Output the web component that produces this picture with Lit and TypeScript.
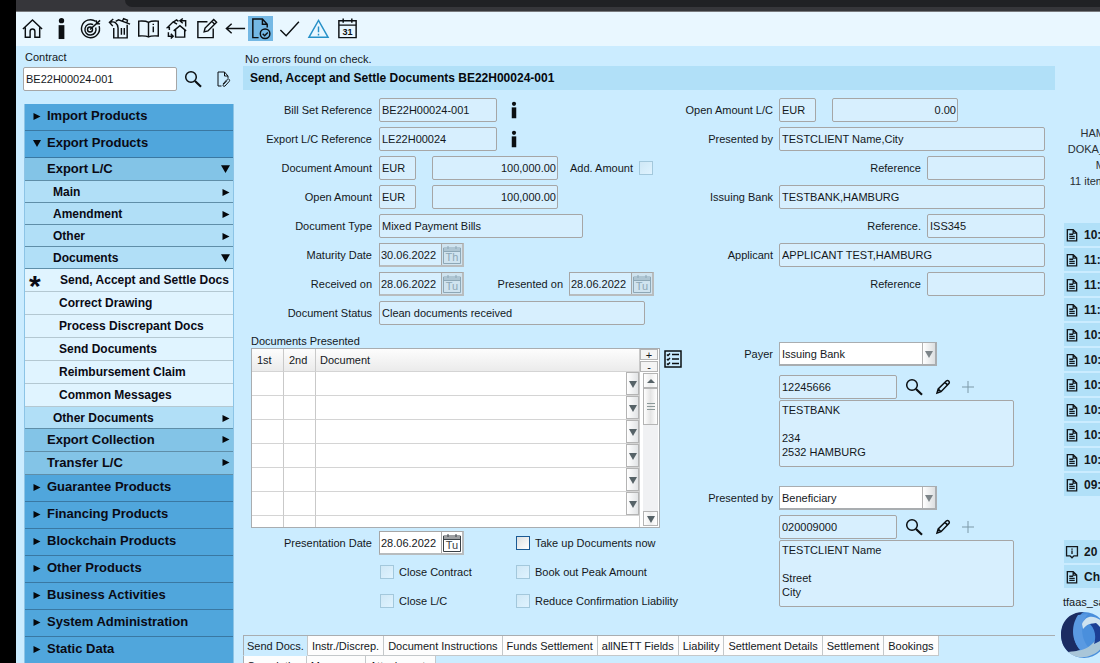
import { LitElement, html, css, svg, nothing } from "lit";
import { customElement, property, state } from "lit/decorators.js";
import { classMap } from "lit/directives/class-map.js";

const ICONS: Record<string, { size: number; body: unknown }> = {
  home: {
    size: 24,
    body: svg`<path d="M2 12.500 12 3l10 9.500M4.500 11v10.200H9.500V15a2.500 2.500 0 0 1 5 0v6.200h5V11" />`,
  },
  info: {
    size: 24,
    body: svg`<circle cx="12" cy="3.800" r="2.800" fill="currentColor" stroke="none" /><path d="M9 8.500h6V23H9z" fill="currentColor" stroke="none" />`,
  },
  target: {
    size: 24,
    body: svg`<path d="M17.500 4.600A9.400 9.400 0 1 0 21 9.500M14.800 8A5.800 5.800 0 1 0 17.400 11" /><circle cx="11.500" cy="13" r="2.600" /><path d="M11.500 13 22 3.500M18 3.500l.5 3.300 3.500.4" />`,
  },
  restore: {
    size: 24,
    body: svg`<path d="M5.500 2 1.500 5.500l3.500 4M2 5.500c5-1.500 8 1 8.500 6v10M8 4.500l3-1.500 12 4.500M15 4.500l1.300-2.700 4 1.500-.6 2.800M10.500 21.800h9.500V8M6 11.500v10.300h4.500M14 11.500v7M17 11.500v7" />`,
  },
  book: {
    size: 24,
    body: svg`<path d="M12 5.500v15M12 5.500C9.500 4 6 4 1.800 4.300v15.500C6 19.500 9.500 19.500 12 20.800c2.500-1.300 6-1.300 10.200-1V4.300C18 4 14.500 4 12 5.500zM17 10v6M17 7v1.400" />`,
  },
  sync: {
    size: 24,
    body: svg`<path d="M8 14.500 14.500 9l6.500 5.500M10 13.500V21h9.500v-7.500M3.500 13.500v-2.500L1.500 11l6-6 4 2.500M8 5l3-2 2 1.500M17.500 1.500l-3 2.500 3 2.500M14.500 4h6v6M5 22.500l2.500-2.500L5 17.500M7.500 20H2.500v-4" />`,
  },
  edit: {
    size: 24,
    body: svg`<path d="M13 5H3v16.500h16V12M9.500 15.500l1-4L19.500 2.500l3 3-9 9zM17.500 4.500l3 3" />`,
  },
  back: { size: 24, body: svg`<path d="M2.500 12H22M8 7l-5.500 5L8 17" />` },
  doccheck: {
    size: 24,
    body: svg`<path d="M10 21.500H4V2h10l5 5.500V11M14 2v5.500h5" /><circle cx="16.800" cy="17.500" r="5" /><path d="m14.300 17.500 2 2 3.300-3.300" />`,
  },
  check: { size: 24, body: svg`<path d="m2.500 13.500 6 6L21.800 5" />` },
  warning: { size: 24, body: svg`<path d="M12 3.500 22 21.200H2zM12 10v6M12 17.500v1.800" />` },
  calendar: {
    size: 24,
    body: svg`<path d="M3 4h18v17.500H3zM3 8.500h18M7.500 1.500V6M16.500 1.500V6" />`,
  },
  search: { size: 18, body: svg`<circle cx="7" cy="7" r="5.300" /><path d="m11 11 6 5.700" stroke-width="2.200" />` },
  attach: {
    size: 18,
    body: svg`<path d="M7.500 16H4V2h6.500L14 6V8M10.500 2v4H14M9 14l4-4.500c1.500-1.500 3.500.3 2.200 1.900L11 16c-1.200 1-2.600-.2-1.700-1.400l3.700-4" />`,
  },
  pencil: { size: 18, body: svg`<path d="m3 15 1.200-4L12.500 2.800c1.500-1 3.500.9 2.600 2.500L7 13.700zM4.300 11l2.700 2.700M11 4.400l2.700 2.700" />` },
  plus: { size: 18, body: svg`<path d="M9 3v12M3 9h12" />` },
  list: {
    size: 18,
    body: svg`<path d="M1 1h16v16H1zM8 4.500h7M8 9h7M8 13.500h7M3 4.500l1 1 2-2M3 9l1 1 2-2M3 13.500l1 1 2-2" />`,
  },
  doc: {
    size: 18,
    body: svg`<path d="M3 2h7.500L15 6.500V16.500H3zM10.500 2v4.500H15M5.500 8h5M5.500 10.700h7M5.500 13.400h7" />`,
  },
  note: { size: 18, body: svg`<path d="M2 2h14v12H11.500L9 16.500 6.500 14H2zM9 7v4.500M9 4.500V6" />` },
};

@customElement("ui-icon")
class UiIcon extends LitElement {
  @property() name = "home";
  static styles = css`
    :host { display: inline-flex; }
    svg { width: 100%; height: 100%; fill: none; stroke: currentColor; stroke-width: var(--stroke, 1.5); }
  `;
  render() {
    const icon = ICONS[this.name];
    return html`<svg viewBox="0 0 ${icon.size} ${icon.size}" aria-hidden="true">${icon.body}</svg>`;
  }
}

type Row = { text: string; level: number; state?: "open" | "closed" | "current" };

const MENU: Row[] = [
  { text: "Import Products", level: 1, state: "closed" },
  { text: "Export Products", level: 1, state: "open" },
  { text: "Export L/C", level: 2, state: "open" },
  { text: "Main", level: 3, state: "closed" },
  { text: "Amendment", level: 3, state: "closed" },
  { text: "Other", level: 3, state: "closed" },
  { text: "Documents", level: 3, state: "open" },
  { text: "Send, Accept and Settle Docs", level: 4, state: "current" },
  { text: "Correct Drawing", level: 4 },
  { text: "Process Discrepant Docs", level: 4 },
  { text: "Send Documents", level: 4 },
  { text: "Reimbursement Claim", level: 4 },
  { text: "Common Messages", level: 4 },
  { text: "Other Documents", level: 3, state: "closed" },
  { text: "Export Collection", level: 2, state: "closed" },
  { text: "Transfer L/C", level: 2, state: "closed" },
  { text: "Guarantee Products", level: 1, state: "closed" },
  { text: "Financing Products", level: 1, state: "closed" },
  { text: "Blockchain Products", level: 1, state: "closed" },
  { text: "Other Products", level: 1, state: "closed" },
  { text: "Business Activities", level: 1, state: "closed" },
  { text: "System Administration", level: 1, state: "closed" },
  { text: "Static Data", level: 1, state: "closed" },
];

const arrow = (dir: "down" | "right" | "up") => html`<svg class="arrow ${dir}" viewBox="0 0 8 8" aria-hidden="true">
  <path d=${dir === "down" ? "M0 1h8L4 8z" : dir === "up" ? "M0 6h8L4 2z" : "M.5 1v7l7-3.500z"} />
</svg>`;

@customElement("side-menu")
class SideMenu extends LitElement {
  static styles = css`
    :host { display: block; }
    nav { display: flex; flex-direction: column; border: 1px solid #8cc4e6; border-width: 0 1px; }
    .row {
      display: flex; align-items: center; box-sizing: border-box; width: 100%; margin: 0; border: 0;
      border-bottom: 1px solid #5f8ea8; color: #0a0a14; text-decoration: none; text-align: left;
      font: bold 12px "Liberation Sans", Arial, sans-serif; white-space: nowrap; cursor: pointer;
    }
    .l1 { height: 27px; background: #50a6dc; font-size: 13px; padding: 0 0 3px 8px; border-color: #3a78a2; }
    .l2 { height: 23px; background: #83c4e7; padding: 0 3px 2px 22px; font-size: 13px; }
    .l3 { height: 22px; background: #b1dff7; padding: 0 3px 0 28px; }
    .l4 { height: 23px; background: #e0f4ff; padding: 0 0 1px 34px; border-color: #b4c8d2; }
    .l1 .arrow { margin-right: 6px; }
    .l2 .arrow, .l3 .arrow { margin-left: auto; }
    .l2 .arrow.down, .l3 .arrow.down { width: 9px; height: 9px; }
    .current { padding-left: 4px; }
    .star { width: 31px; font-size: 30px; line-height: 10px; padding-top: 13px; box-sizing: border-box; }
    .arrow { width: 8px; height: 8px; fill: #05080c; flex: none; }
  `;
  render() {
    return html`<nav aria-label="Products">
      ${MENU.map((r) => {
        const cls = classMap({ row: true, ["l" + r.level]: true, current: r.state === "current" });
        if (r.level === 4)
          return html`<a class=${cls} href="#">${r.state === "current" ? html`<span class="star">*</span>` : nothing}${r.text}</a>`;
        const a = arrow(r.state === "open" ? "down" : "right");
        return html`<button class=${cls} aria-expanded=${r.state === "open"}>
          ${r.level === 1 ? a : nothing}<span>${r.text}</span>${r.level > 1 ? a : nothing}
        </button>`;
      })}
    </nav>`;
  }
}

const TOOLS: [string, string][] = [
  ["home", "Home"], ["info", "Info"], ["target", "Target"], ["restore", "Restore"], ["book", "Manual"],
  ["sync", "Switch"], ["edit", "Edit"], ["back", "Back"], ["doccheck", "Check document"],
  ["check", "Confirm"], ["warning", "Warnings"], ["calendar", "Calendar"],
];
const TIMES = ["10:", "11:", "11:", "11:", "10:", "10:", "10:", "10:", "10:", "10:", "09:"];
const TABS = ["Send Docs.", "Instr./Discrep.", "Document Instructions", "Funds Settlement", "allNETT Fields",
  "Liability", "Settlement Details", "Settlement", "Bookings"];
const SUBTABS = ["Completion", "Messages", "Attachments"];

@customElement("app-root")
class AppRoot extends LitElement {
  @state() private tab = 0;

  static styles = css`
    :host {
      display: flex; height: 100vh; overflow: hidden; background: #cbecff; color: #14181c;
      font: 11px/14px "Liberation Sans", Arial, sans-serif;
    }
    * { box-sizing: border-box; }
    button, input, select, textarea { font: inherit; color: inherit; margin: 0; }
    .edge { width: 16px; flex: none; background: #000; }
    .app { flex: 1; min-width: 0; display: flex; flex-direction: column; }
    .browser { height: 12px; flex: none; background: #36363a; border-bottom: 1px solid #77797d; padding-left: 109px; }
    .address { height: 7px; background: #202124; border-bottom-left-radius: 12px; }
    .toolbar { height: 34px; flex: none; display: flex; align-items: center; gap: 4px; background: #e9f7ff; padding: 0 0 1px 4px; }
    .tool { width: 25px; height: 25px; padding: 1px; border: 0; background: none; color: #0b0f12; display: flex; cursor: pointer; }
    .tool ui-icon { flex: 1; }
    .doccheck { background: #74b8e4; margin-left: -4px; }
    .warning { color: #2791c8; }
    .calendar { display: grid; }
    .calendar > * { grid-area: 1 / 1; }
    .calendar span { font: bold 9px/11px "Liberation Sans", Arial, sans-serif; align-self: end; text-align: center; padding-bottom: 2px; }
    .body { flex: 1; min-height: 0; display: flex; }

    .side { width: 227px; flex: none; padding: 4px 9px 0 7px; }
    .side label { display: block; padding-left: 2px; line-height: 15px; }
    .lookup { display: flex; align-items: center; padding-top: 2px; }
    .lookup .field { width: 154px; background: #fff; }
    .lookup .icon { margin-left: 7px; }
    .lookup .icon + .icon { margin-left: 12px; --stroke: 1; }
    side-menu { margin: 13px 0 0 1px; }

    main { flex: 1; min-width: 0; display: flex; flex-direction: column; }
    .status { padding: 6px 0 0 2px; margin: 0; }
    h1 { margin: 0; font-size: 12px; line-height: 24px; background: #b1e0f8; padding-left: 7px; color: #05080c; }
    .form { display: flex; padding: 8px 10px 0 0; }
    .left { width: 427px; flex: none; display: flex; flex-direction: column; gap: 5px; }
    .right { flex: 1; min-width: 0; display: flex; flex-direction: column; gap: 5px; }
    .row { display: flex; align-items: center; height: 24px; }
    .lab { text-align: right; flex: none; white-space: nowrap; }
    .left .lab { width: 129px; margin-right: 7px; }
    .right .lab { width: 103px; margin-right: 6px; }
    .right .ref { width: auto; margin-left: auto; }
    .left .lab.inner { width: 99px; margin-right: 6px; }
    .left .lab.add { width: auto; margin: 0 6px 0 12px; }
    .field {
      height: 24px; border: 1px solid #a6a6a6; border-radius: 2px; padding: 0 2px; background: #d7effe;
      outline: none; min-width: 0;
    }
    .w-cur { width: 37px; margin-right: 16px; }
    .w-amt { width: 126px; text-align: right; padding-right: 1px; }
    .w-ref { width: 118px; }
    .w-type { width: 204px; }
    .w-long { width: 266px; }
    .w-fill { flex: 1; }
    .icon { width: 18px; height: 18px; flex: none; padding: 0; border: 0; background: none; display: flex; cursor: pointer; color: #0b0f12; }
    .icon ui-icon { flex: 1; }
    .icon:disabled { color: #7d99a8; }
    .row .icon.inf { margin-left: 8px; }
    .date { display: flex; width: 85px; height: 24px; border: 1px solid #a6a6a6; border-width: 1px 2px 2px 1px; border-color: #a6a6a6 #b8bcbe #b8bcbe #a6a6a6; background: #d7effe; }
    .date input { flex: 1; min-width: 0; border: 0; padding: 0 0 0 1px; background: none; outline: none; }
    .date button { width: 21px; border: 0; border-left: 1px solid #a6a6a6; padding: 1px; display: grid; background: #cfe3ef; color: #8da7b6; }
    .date button > * { grid-area: 1 / 1; }
    .date button span { align-self: end; line-height: 13px; text-align: center; }
    .date svg { width: 18px; height: 19px; fill: none; stroke: currentColor; }
    .date.on, .date.on button { background: #fff; }
    .date.on button { color: #3a4146; }
    .box { appearance: none; width: 14px; height: 14px; flex: none; border: 1px solid #a3c8dc; background: linear-gradient(135deg, #cfe8f6, #dff3ff); }
    .box.on { border-color: #1a5a94; background: linear-gradient(135deg, #dcdfe0, #fff); }
    .opts { display: grid; grid-template-columns: 136px 136px 1fr; row-gap: 5px; margin-top: -2px; }
    .opts .lab { width: auto; line-height: 24px; }
    .opts .start { grid-column: 2; }
    .tick { display: flex; align-items: center; gap: 5px; height: 24px; white-space: nowrap; padding-left: 1px; }

    .docs { display: flex; align-items: flex-start; padding: 5px 0 0 8px; }
    .grid { width: 409px; flex: none; }
    .caption { line-height: 13px; }
    .panel { display: flex; height: 180px; overflow: hidden; border: 1px solid #a9adb0; background: #fff; }
    table { flex: 1; align-self: flex-start; border-collapse: separate; border-spacing: 0; table-layout: fixed; }
    th, td { padding: 0; border-right: 1px solid #c9c9c9; border-bottom: 1px solid #d4d4d4; height: 24px; }
    th { height: 23px; background: linear-gradient(#fdfdfd, #ebebeb); font-weight: normal; text-align: left; padding-left: 5px; }
    th:nth-child(-n + 2) { width: 32px; }
    th:last-child { padding-left: 4px; }
    td .drop { display: flex; margin-left: auto; }
    .drop { width: 13px; height: 23px; padding: 0; border: 1px solid #b4b4b4; background: linear-gradient(90deg, #fff, #e2e4e6); align-items: center; justify-content: center; }
    .arrow { width: 8px; height: 8px; fill: #566267; flex: none; }
    .bar { width: 19px; flex: none; display: flex; flex-direction: column; align-items: flex-end; padding: 0 1px 1px 0; background: #fff; }
    .bar button { width: 15px; height: 15px; flex: none; padding: 0; border: 1px solid #b4b4b4; background: linear-gradient(90deg, #fff, #eee, #fff); display: flex; align-items: center; justify-content: center; line-height: 8px; }
    .bar .pm { width: 18px; height: 11px; margin-bottom: 1px; background: #f4f4f4; }
    .track { width: 15px; flex: 1; background: #f0f1f3; }
    .thumb { height: 37px; border: 1px solid #b4b4b4; background: linear-gradient(90deg, #fff, #e4e4e4, #fff); display: flex; align-items: center; justify-content: center; }
    .thumb svg { width: 8px; height: 8px; stroke: #8b9999; }
    .docs .icon { margin: 15px -20px 0 4px; }

    .party { display: flex; flex-direction: column; margin-bottom: 14px; }
    .party.first { margin-top: 41px; }
    .select { display: grid; width: 158px; height: 24px; }
    .select > * { grid-area: 1 / 1; }
    .select select { appearance: none; width: 100%; border: 1px solid #a9adb0; border-width: 1px 2px 2px 1px; border-radius: 0; background: #fff; padding: 0 16px 0 2px; }
    .select span { justify-self: end; width: 13px; margin: 1px 2px 2px 0; border-left: 1px solid #b4b4b4; background: linear-gradient(90deg, #fff, #dcdfe1); display: flex; align-items: center; justify-content: center; pointer-events: none; }
    .select .arrow { fill: #7c8488; }
    .number { margin: 9px 0 1px 109px; }
    .second .number { margin-top: 5px; }
    .number .icon { margin: 0 0 1px 8px; }
    .number .icon + .icon { margin-left: 11px; }
    .number .icon + .icon + .icon { margin: 0 0 0 7px; --stroke: 1; }
    textarea.field { display: block; width: 235px; height: 67px; margin-left: 109px; resize: none; padding: 2px; line-height: 14px; overflow: hidden; }

    .tabs { display: flex; margin-top: 14px; border-top: 1px solid #a9adb0; flex: none; }
    .tabs.sub { margin: 0; border: 0; }
    .tab { height: 20px; padding: 0 4px; border: 0; border-right: 1px solid #c4c8ca; border-bottom: 1px solid #c4c8ca; background: #fdfdfd; white-space: nowrap; cursor: pointer; }
    .tabs .tab:first-child { border-left: 1px solid #a9adb0; padding: 0 3px; }
    .tab.active { background: #cbecff; border-bottom-color: #cbecff; }

    aside { width: 45px; flex: none; overflow: hidden; padding: 79px 0 0 8px; display: flex; flex-direction: column; }
    .user { margin: 0 -5px 34px 0; line-height: 16px; display: flex; flex-direction: column; align-items: flex-end; color: #2a2f33; }
    .item { display: flex; align-items: center; height: 23px; margin: 0 0 2px 1px; padding-left: 1px; background: #b1e0f8; color: #14181c; text-decoration: none; font-weight: bold; font-size: 12px; white-space: nowrap; }
    .item ui-icon { width: 14px; height: 14px; margin-right: 5px; flex: none; --stroke: 1.7; }
    .history { padding-bottom: 42px; }
    .host { padding: 5px 0 2px; white-space: nowrap; }
    .logo { width: 48px; height: 48px; flex: none; margin-left: -3px; }
  `;

  private input(label: string, value: string, width: string, after: unknown = nothing) {
    const id = label.replace(/\W/g, "");
    return html`<div class="row"><label class="lab" for=${id}>${label}</label>
      <input id=${id} class="field ${width}" readonly .value=${value} />${after}</div>`;
  }

  private money(label: string, value: string, after: unknown = nothing) {
    const id = label.replace(/\W/g, "");
    return html`<div class="row"><label class="lab" for=${id}>${label}</label>
      <input id=${id} class="field w-cur" readonly .value=${"EUR"} />
      <input class="field w-amt" aria-label="${label} value" readonly .value=${value} />${after}</div>`;
  }

  private date(id: string, value: string, day: string, on = false) {
    return html`<span class="date ${on ? "on" : ""}"><input id=${id} ?readonly=${!on} .value=${value} />
      <button aria-label="Pick date" ?disabled=${!on}>
        <svg viewBox="0 0 18 19" aria-hidden="true"><path d="M.5 3v15.500h17V3zM.5 6.500h17M.5 5h17M5 1v3M13 1v3" /></svg>
        <span>${day}</span></button></span>`;
  }

  private reference(id: string, label: string, value: string) {
    return html`<div class="row"><label class="lab ref" for=${id}>${label}</label>
      <input id=${id} class="field w-ref" readonly .value=${value} /></div>`;
  }

  private tick(label: string, on = false) {
    return html`<label class="tick"><input class="box ${on ? "on" : ""}" type="checkbox" ?disabled=${!on} />${label}</label>`;
  }

  private party(cls: string, label: string, choice: string, no: string, address: string) {
    return html`<div class="party ${cls}">
      <div class="row"><label class="lab" for=${cls}>${label}</label>
        <span class="select"><select id=${cls}><option>${choice}</option></select><span>${arrow("down")}</span></span></div>
      <div class="row number"><input class="field w-ref" aria-label="${label} number" readonly .value=${no} />
        <button class="icon" aria-label="Search"><ui-icon name="search"></ui-icon></button>
        <button class="icon" aria-label="Edit"><ui-icon name="pencil"></ui-icon></button>
        <button class="icon" aria-label="Add" disabled><ui-icon name="plus"></ui-icon></button></div>
      <textarea class="field" aria-label="${label} address" readonly .value=${address}></textarea>
    </div>`;
  }

  render() {
    const infoButton = html`<button class="icon inf" aria-label="Info"><ui-icon name="info"></ui-icon></button>`;
    return html`
      <div class="edge"></div>
      <div class="app">
        <div class="browser"><div class="address"></div></div>
        <div class="toolbar" role="toolbar">
          ${TOOLS.map(([name, title]) => html`<button class="tool ${name}" aria-label=${title}>
            <ui-icon name=${name}></ui-icon>${name === "calendar" ? html`<span>31</span>` : nothing}</button>`)}
        </div>
        <div class="body">
          <div class="side">
            <label for="contract">Contract</label>
            <div class="lookup">
              <input id="contract" class="field" .value=${"BE22H00024-001"} />
              <button class="icon" aria-label="Search"><ui-icon name="search"></ui-icon></button>
              <button class="icon" aria-label="Attachments"><ui-icon name="attach"></ui-icon></button>
            </div>
            <side-menu></side-menu>
          </div>
          <main>
            <p class="status">No errors found on check.</p>
            <h1>Send, Accept and Settle Documents BE22H00024-001</h1>
            <div class="form">
              <div class="left">
                ${this.input("Bill Set Reference", "BE22H00024-001", "w-ref", infoButton)}
                ${this.input("Export L/C Reference", "LE22H00024", "w-ref", infoButton)}
                ${this.money("Document Amount", "100,000.00", html`<label class="lab add" for="add">Add. Amount</label><input id="add" class="box" type="checkbox" disabled />`)}
                ${this.money("Open Amount", "100,000.00")}
                ${this.input("Document Type", "Mixed Payment Bills", "w-type")}
                <div class="row"><label class="lab" for="maturity">Maturity Date</label>${this.date("maturity", "30.06.2022", "Th")}</div>
                <div class="row"><label class="lab" for="received">Received on</label>${this.date("received", "28.06.2022", "Tu")}
                  <label class="lab inner" for="presented">Presented on</label>${this.date("presented", "28.06.2022", "Tu")}</div>
                ${this.input("Document Status", "Clean documents received", "w-long")}
                <div class="docs">
                  <div class="grid">
                    <div class="caption">Documents Presented</div>
                    <div class="panel">
                      <table aria-label="Documents Presented">
                        <thead><tr><th>1st</th><th>2nd</th><th>Document</th></tr></thead>
                        <tbody>${[0, 1, 2, 3, 4, 5, 6].map((i) => html`<tr><td></td><td></td><td>${i < 6
                          ? html`<button class="drop" aria-label="Choose document">${arrow("down")}</button>` : nothing}</td></tr>`)}</tbody>
                      </table>
                      <div class="bar">
                        <button class="pm">+</button><button class="pm">-</button>
                        <button aria-label="Scroll up">${arrow("up")}</button>
                        <div class="track"><div class="thumb"><svg viewBox="0 0 8 8"><path d="M0 .5h8M0 3.500h8M0 6.500h8" /></svg></div></div>
                        <button aria-label="Scroll down">${arrow("down")}</button>
                      </div>
                    </div>
                  </div>
                  <button class="icon" aria-label="Checklist"><ui-icon name="list"></ui-icon></button>
                </div>
                <div class="opts">
                  <label class="lab" for="presentation">Presentation Date</label>
                  ${this.date("presentation", "28.06.2022", "Tu", true)}
                  ${this.tick("Take up Documents now", true)}
                  <div class="start">${this.tick("Close Contract")}</div>${this.tick("Book out Peak Amount")}
                  <div class="start">${this.tick("Close L/C")}</div>${this.tick("Reduce Confirmation Liability")}
                </div>
              </div>
              <div class="right">
                ${this.money("Open Amount L/C", "0.00")}
                ${this.input("Presented by", "TESTCLIENT Name,City", "w-fill")}
                ${this.reference("ref1", "Reference", "")}
                ${this.input("Issuing Bank", "TESTBANK,HAMBURG", "w-fill")}
                ${this.reference("ref2", "Reference.", "ISS345")}
                ${this.input("Applicant", "APPLICANT TEST,HAMBURG", "w-fill")}
                ${this.reference("ref3", "Reference", "")}
                ${this.party("first", "Payer", "Issuing Bank", "12245666", "TESTBANK\n\n234\n2532 HAMBURG")}
                ${this.party("second", "Presented by", "Beneficiary", "020009000", "TESTCLIENT Name\n\nStreet\nCity")}
              </div>
            </div>
            <div class="tabs" role="tablist">
              ${TABS.map((t, i) => html`<button role="tab" class=${classMap({ tab: true, active: i === this.tab })}
                aria-selected=${i === this.tab} @click=${() => (this.tab = i)}>${t}</button>`)}
            </div>
            <div class="tabs sub">${SUBTABS.map((t) => html`<button class="tab">${t}</button>`)}</div>
          </main>
          <aside>
            <div class="user"><span>HAM</span><span>DOKA_</span><span>M</span><span>11 item</span></div>
            <div class="history">${TIMES.map((t) => html`<a class="item" href="#"><ui-icon name="doc"></ui-icon>${t}</a>`)}</div>
            <a class="item" href="#"><ui-icon name="note"></ui-icon>20</a>
            <a class="item" href="#"><ui-icon name="doc"></ui-icon>Ch</a>
            <div class="host">tfaas_sa</div>
            <svg class="logo" viewBox="0 0 48 48" aria-hidden="true">
              <circle cx="24" cy="24" r="23" fill="#4a8fdc" />
              <path d="M24 1C8 1 1 12 1 24c0 8 4 15 9 18l10-3C12 30 11 14 22 2z" fill="#1b2c62" />
              <path d="M18 4c-8 12-6 28 4 36l8-2C20 28 20 12 28 3z" fill="#5a9ae2" />
              <path d="M22 13C26 4 34 3 44 12l-5 4c-6-5-11-4-16 2z" fill="#cfe3f0" />
              <path d="M8 41c10-1 18-2 24-8 3-3 5-5 6-9l6 8c-4 12-24 20-36 9z" fill="#a9c6d8" />
              <path d="M30 13c6 6 6 14 4 20l8-4c2-6 0-12-6-17z" fill="#1c3f94" />
            </svg>
          </aside>
        </div>
      </div>
    `;
  }
}
